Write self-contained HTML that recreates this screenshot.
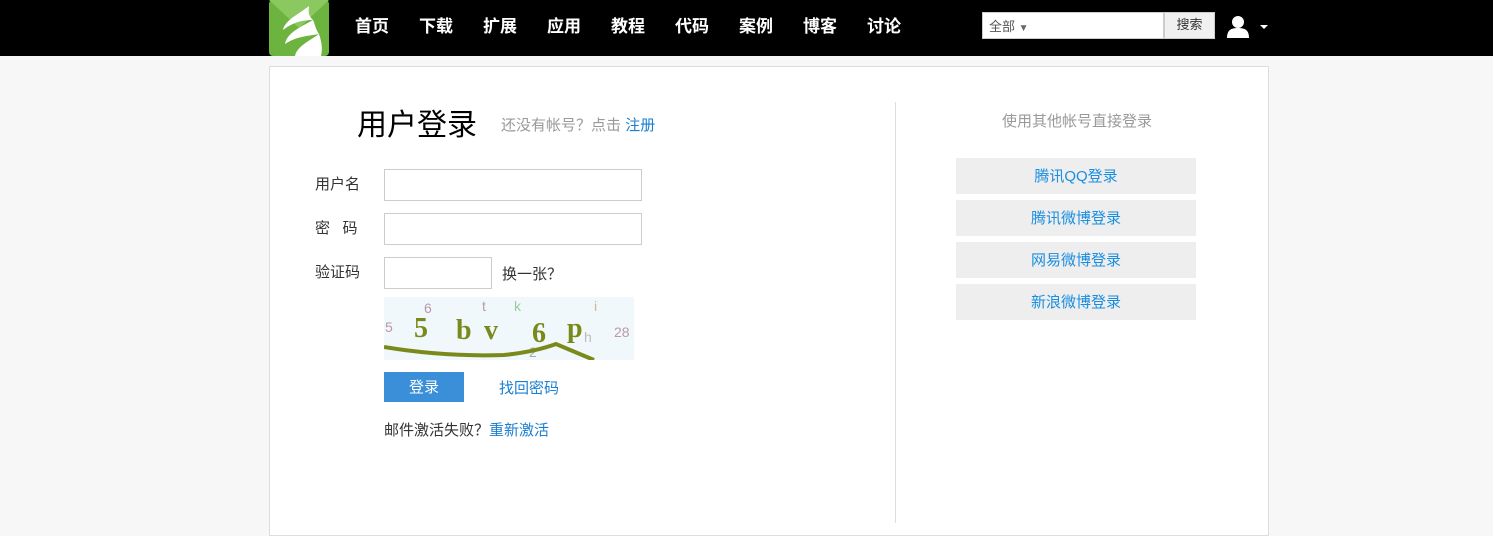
<!DOCTYPE html>
<html><head><meta charset="utf-8"><style>
*{margin:0;padding:0;box-sizing:border-box}
body{width:1493px;height:523px;overflow:hidden;background:#f7f7f7;font-family:"Liberation Sans","Noto Sans CJK SC",sans-serif;position:relative}
.top{position:absolute;left:0;top:0;width:1493px;height:56px;background:#000}
.nav a{position:absolute;top:12px;color:#fff;font-weight:bold;font-size:17px;text-decoration:none}
.box{position:absolute;left:269px;top:66px;width:1000px;height:470px;background:#fff;border:1px solid #ddd}
.abs{position:absolute}
.lbl{font-size:15px;color:#333}
.inp{position:absolute;border:1px solid #ccc;background:#fff;height:32px}
.blue{color:#1a7fd0}
.sb{position:absolute;left:956px;width:240px;height:36px;background:#eee;color:#1a8ee0;font-size:15px;text-align:center;line-height:38px}
</style></head><body>
<div class="top">
 <svg class="abs" style="left:269px;top:0" width="60" height="56"><rect width="60" height="56" rx="4" fill="#6db33f"/><path d="M0 0L30 28L60 0Z" fill="#8cc860"/><path d="M40 6C30 14 16 20 14 30C24 22 34 20 44 20C38 14 40 10 40 6Z M44 20C34 26 18 32 16 44C28 36 40 36 50 34C46 28 46 24 44 20Z M50 34C42 40 28 46 26 56L52 56C54 48 52 40 50 34Z" fill="#fff"/></svg>
 <div class="nav"><a style="left:355px">首页</a><a style="left:419px">下载</a><a style="left:483px">扩展</a><a style="left:547px">应用</a><a style="left:611px">教程</a><a style="left:675px">代码</a><a style="left:739px">案例</a><a style="left:803px">博客</a><a style="left:867px">讨论</a></div>
 <div class="abs" style="left:982px;top:12px;width:182px;height:27px;background:#fff;border:1px solid #ccc;font-size:13px;color:#555;padding:3px 6px">全部 <span style="font-size:10px;color:#666">▼</span></div>
 <div class="abs" style="left:1164px;top:12px;width:51px;height:27px;background:#f0f0f0;border:1px solid #ccc;font-size:13px;color:#333;text-align:center;line-height:24px">搜索</div>
 <svg class="abs" style="left:1227px;top:15px" width="22" height="24"><circle cx="11" cy="7" r="6" fill="#fff"/><path d="M0 23C0 15 4 13 11 13S22 15 22 23Z" fill="#fff"/></svg>
 <div class="abs" style="left:1260px;top:25px;width:0;height:0;border-left:4px solid transparent;border-right:4px solid transparent;border-top:4px solid #fff"></div>
</div>
<div class="box"></div>
<div class="abs" style="left:357px;top:100px;font-size:30px;color:#000">用户登录</div>
<div class="abs" style="left:501px;top:114px;font-size:15px;color:#999">还没有帐号<span style="font-family:'Noto Sans CJK SC'">？</span>点击 <span class="blue">注册</span></div>
<div class="abs lbl" style="left:315px;top:173px">用户名</div>
<div class="inp" style="left:384px;top:169px;width:258px"></div>
<div class="abs lbl" style="left:315px;top:217px">密&nbsp;&nbsp;&nbsp;码</div>
<div class="inp" style="left:384px;top:213px;width:258px"></div>
<div class="abs lbl" style="left:315px;top:261px">验证码</div>
<div class="inp" style="left:384px;top:257px;width:108px"></div>
<div class="abs lbl" style="left:502px;top:263px">换一张<span style="font-family:'Noto Sans CJK SC'">？</span></div>
<svg class="abs" style="left:384px;top:297px" width="250" height="63"><rect width="250" height="63" fill="#f0f8fc"/>
<g font-size="14" font-family="Liberation Sans" fill="#b9a"><text x="1" y="35">5</text><text x="40" y="16">6</text><text x="98" y="14">t</text><text x="130" y="14" fill="#9c9">k</text><text x="150" y="40" fill="#bbb">r</text><text x="230" y="40">28</text><text x="200" y="45" fill="#bbb">h</text><text x="145" y="60" fill="#aaa">2</text><text x="210" y="14" fill="#cb8">i</text></g>
<g font-size="28" font-weight="bold" fill="#7a8a1a" font-family="Liberation Serif"><text x="30" y="40">5</text><text x="72" y="42">b</text><text x="100" y="42">v</text><text x="148" y="45">6</text><text x="183" y="40">p</text></g>
<path d="M0 50Q60 60 120 58Q150 55 172 47L210 63" stroke="#7a8a1a" stroke-width="4" fill="none"/></svg>
<div class="abs" style="left:384px;top:372px;width:80px;height:30px;background:#3a8fd8;color:#fff;font-size:15px;text-align:center;line-height:32px">登录</div>
<div class="abs blue" style="left:499px;top:377px;font-size:15px">找回密码</div>
<div class="abs lbl" style="left:384px;top:419px">邮件激活失败<span style="font-family:'Noto Sans CJK SC'">？</span><span class="blue">重新激活</span></div>
<div class="abs" style="left:895px;top:102px;width:1px;height:421px;background:#ddd"></div>
<div class="abs" style="left:1002px;top:110px;font-size:15px;color:#999">使用其他帐号直接登录</div>
<div class="sb" style="top:158px">腾讯QQ登录</div>
<div class="sb" style="top:200px">腾讯微博登录</div>
<div class="sb" style="top:242px">网易微博登录</div>
<div class="sb" style="top:284px">新浪微博登录</div>
</body></html>
